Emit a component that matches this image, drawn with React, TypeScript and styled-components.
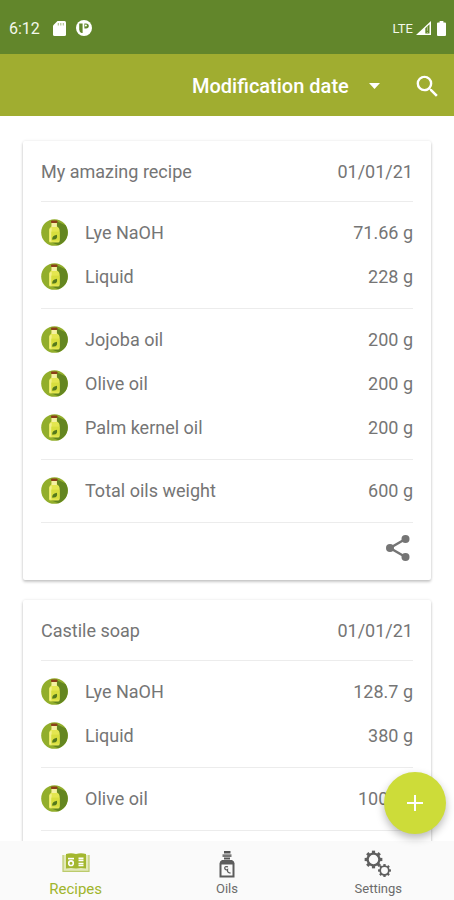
import React from "react";
import styled, { createGlobalStyle } from "styled-components";

const GlobalStyle = createGlobalStyle`
  * { box-sizing: border-box; }
  body {
    margin: 0;
    background: #ffffff;
    color: #757575;
    font-family: Roboto, "Liberation Sans", sans-serif;
    font-size: 18px;
  }
  button, select { font: inherit; color: inherit; }
`;

const Screen = styled.div`
  display: flex;
  flex-direction: column;
  height: 100vh;
`;

const StatusBar = styled.div`
  flex: none;
  display: flex;
  align-items: center;
  justify-content: space-between;
  height: 54px;
  padding: 2px 8px 0 9px;
  background: #62862b;
  color: #f4f8ec;
  font-size: 16px;
`;

const StatusGroup = styled.div<{ $gap: number }>`
  display: flex;
  align-items: center;
  gap: ${({ $gap }) => $gap}px;
`;

const Clock = styled.span`
  margin-right: 3px;
`;

const Network = styled.span`
  font-size: 13px;
`;

const AppBar = styled.header`
  flex: none;
  display: flex;
  align-items: center;
  justify-content: flex-end;
  gap: 33px;
  height: 62px;
  padding: 2px 12px 0;
  background: #a0ad30;
  color: #ffffff;
`;

const SortBox = styled.label`
  display: flex;
  align-items: center;
  gap: 20px;
`;

const SortSelect = styled.select`
  appearance: none;
  border: 0;
  padding: 0;
  background: transparent;
  font-size: 20px;
  font-weight: 500;
  line-height: 24px;

  option { color: #424242; }
`;

const IconButton = styled.button`
  display: flex;
  padding: 0;
  border: 0;
  background: transparent;
  cursor: pointer;
`;

const Content = styled.main`
  position: relative;
  flex: 1;
  min-height: 0;
  display: flex;
  flex-direction: column;
`;

const RecipeList = styled.div`
  flex: 1;
  min-height: 0;
  display: flex;
  flex-direction: column;
  gap: 20px;
  padding: 25px 23px;
  overflow-y: auto;
  scrollbar-width: none;
`;

const Card = styled.article`
  flex: none;
  padding: 0 18px;
  border-radius: 2px;
  background: #ffffff;
  box-shadow: 0 2px 3px rgba(0, 0, 0, 0.2), 0 0 3px rgba(0, 0, 0, 0.1);
`;

const CardHeader = styled.div`
  display: flex;
  align-items: center;
  justify-content: space-between;
  height: 60px;
`;

const CardTitle = styled.h2`
  margin: 0;
  font-size: 18px;
  font-weight: 400;
`;

const Group = styled.ul`
  margin: 0;
  padding: 8px 0 10px;
  border-top: 1px solid #ececec;
  list-style: none;
`;

const Row = styled.li`
  display: flex;
  align-items: center;
  height: 44px;
`;

const Name = styled.span`
  flex: 1;
  margin-left: 17px;
`;

const CardFooter = styled.div`
  display: flex;
  align-items: center;
  justify-content: flex-end;
  height: 58px;
  padding-bottom: 8px;
  border-top: 1px solid #ececec;
`;

const Fab = styled.button`
  position: absolute;
  right: 8px;
  bottom: 7px;
  display: flex;
  align-items: center;
  justify-content: center;
  width: 62px;
  height: 62px;
  border: 0;
  border-radius: 50%;
  background: #cddc39;
  color: #ffffff;
  box-shadow: 0 4px 8px rgba(0, 0, 0, 0.28);
  cursor: pointer;
`;

const BottomNav = styled.nav`
  flex: none;
  display: grid;
  grid-template-columns: repeat(3, 1fr);
  height: 59px;
  background: #fafafa;
`;

const NavItem = styled.a<{ $active?: boolean }>`
  display: flex;
  flex-direction: column;
  align-items: center;
  justify-content: space-between;
  padding: 9px 0 2px;
  color: ${({ $active }) => ($active ? "#a0b52c" : "#6b6b6b")};
  font-size: ${({ $active }) => ($active ? 15 : 13)}px;
  line-height: 18px;
  text-decoration: none;
`;

const SdCardIcon = () => (
  <svg width="13" height="15" viewBox="0 0 13 15" aria-hidden="true">
    <path d="M4.5 0H11.5Q13 0 13 1.5V13.5Q13 15 11.5 15H1.5Q0 15 0 13.5V4.5Z" fill="#fff" />
    <path d="M5.3 2V4.6M7.8 2V4.6M10.3 2V4.6" stroke="#a9bf87" strokeWidth="1.1" />
  </svg>
);

const AppBadgeIcon = () => (
  <svg width="16" height="16" viewBox="0 0 16 16" aria-hidden="true">
    <circle cx="8" cy="8" r="8" fill="#fff" />
    <path d="M3.2 3.4H6.6V13H5.6Q3.2 11.8 3.2 9.4Z" fill="#62862b" />
    <path d="M8.4 3.4H10Q12.8 3.6 12.8 5.900T10 8.400H8.400Z" fill="#62862b" />
    <circle cx="9.900" cy="5.500" r="1" fill="#fff" />
  </svg>
);

const SignalIcon = () => (
  <svg width="15" height="14" viewBox="0 0 15 14" aria-hidden="true">
    <path d="M0 14L15 0V14Z" fill="#fff" />
    <path d="M9.3 12.6V7.2L13.5 3.3V12.6Z" fill="#62862b" />
    <path d="M11.4 5.2V9.8M11.4 11V12.6" stroke="#a9bf87" strokeWidth="1" />
  </svg>
);

const BatteryIcon = () => (
  <svg width="9" height="15" viewBox="0 0 9 15" aria-hidden="true">
    <path d="M2.6 0H6.4V1.5H8Q9 1.5 9 2.5V14Q9 15 8 15H1Q0 15 0 14V2.5Q0 1.5 1 1.5H2.6Z" fill="#fff" />
  </svg>
);

const CaretIcon = () => (
  <svg width="11" height="6" viewBox="0 0 11 6" aria-hidden="true">
    <path d="M0 0H11L5.5 6Z" fill="#fff" />
  </svg>
);

const SearchIcon = () => (
  <svg width="29" height="29" viewBox="0 0 24 24" aria-hidden="true">
    <path
      fill="#fff"
      d="M15.5 14h-.79l-.28-.27A6.47 6.47 0 0 0 16 9.5 6.5 6.5 0 1 0 9.5 16c1.61 0 3.09-.59 4.23-1.57l.27.28v.79l5 4.99L20.49 19l-4.99-5zm-6 0C7.01 14 5 11.99 5 9.5S7.01 5 9.5 5 14 7.01 14 9.5 11.99 14 9.5 14z"
    />
  </svg>
);

const BottleIcon = () => (
  <svg width="27" height="27" viewBox="0 0 27 27" aria-hidden="true">
    <circle cx="13.5" cy="13.5" r="13.3" fill="#92ae2b" />
    <path d="M16 2.5L24.6 6.2A13.3 13.3 0 0 1 17.5 26.2L9.5 23Z" fill="#648620" />
    <path d="M10.6 3.5H15.8V7.2Q18.6 8.6 18.6 11V22Q18.6 23.6 17 23.6H9.6Q8 23.6 8 22V11Q8 8.600 10.600 7.200Z" fill="#e4e650" />
    <path d="M10.600 4H15.800V8H10.600Z" fill="#f4f0a2" />
    <path d="M8.600 10.600Q9 9 10.600 8.400V22.400H8.600Z" fill="#f2f18c" />
    <rect x="10" y="1.400" width="6.400" height="2.700" rx="0.800" fill="#8c3f19" />
    <path d="M10.300 12.600H18.600V21.600H10.300Z" fill="#d8de3e" />
    <path d="M11.300 20.700Q10.500 16.600 15.900 15.700Q17 20.500 12.700 20.500Z" fill="#55791d" />
  </svg>
);

const ShareIcon = () => (
  <svg width="30" height="30" viewBox="0 0 30 30" aria-hidden="true">
    <path d="M22.500 6L7 15L22.500 24" fill="none" stroke="#757575" strokeWidth="2.500" />
    <circle cx="22.500" cy="6" r="4" fill="#757575" />
    <circle cx="7" cy="15" r="4" fill="#757575" />
    <circle cx="22.500" cy="24" r="4" fill="#757575" />
  </svg>
);

const PlusIcon = () => (
  <svg width="16" height="16" viewBox="0 0 16 16" aria-hidden="true">
    <path d="M8 0V16M0 8H16" stroke="currentColor" strokeWidth="2" />
  </svg>
);

const RecipesIcon = () => (
  <svg width="28" height="26" viewBox="0 0 28 26" aria-hidden="true">
    <path d="M1 5H27V21.500Q20 22 14 22Q8 22 1 21.500Z" fill="#e2e9b9" />
    <path d="M1 5V21.300H27V5" fill="none" stroke="#bccb6c" strokeWidth="1.200" />
    <path d="M4 4Q9 2.500 14 4Q19 2.500 24 4V18.500Q19 17.500 14 18.500Q9 17.500 4 18.500Z" fill="#a3b72f" />
    <circle cx="9" cy="13.200" r="2.300" fill="none" stroke="#fff" strokeWidth="1.600" />
    <path d="M6 8.600H12" stroke="#fff" strokeWidth="1.600" />
    <path d="M16.500 8.300H21.500M16.500 10.500H21.500M16.500 13.500H21.500M16.500 15.500H21.500" stroke="#fff" strokeWidth="1.700" />
  </svg>
);

const OilsIcon = () => (
  <svg width="18" height="28" viewBox="0 0 18 28" aria-hidden="true">
    <path d="M6 1H12.500V3.500H6Z" fill="#555" />
    <path d="M4.500 4.300H13.500V7H4.500Z" fill="#777" />
    <path d="M6 7.500H12V9.500H6Z" fill="#555" />
    <path d="M4 10H14Q16.500 11 16.500 13.500V27.500H1.500V13.500Q1.500 11 4 10Z" fill="#5c5c5c" />
    <path d="M3.500 14.500H14.500V25.500H3.500Z" fill="#fafafa" />
    <path d="M10 16.800Q6.300 15.800 6.800 18.500Q7.500 20.500 9.500 19.500Q9 23 12.500 23" fill="none" stroke="#5c5c5c" strokeWidth="1.300" />
  </svg>
);

const TEETH = [0, 45, 90, 135, 180, 225, 270, 315];

function Gear({ cx, cy, r }: { cx: number; cy: number; r: number }) {
  return (
    <g transform={`translate(${cx} ${cy})`} fill="#5f5f5f">
      <circle r={r} fill="none" stroke="#5f5f5f" strokeWidth={r * 0.4} />
      {TEETH.map((angle) => (
        <rect
          key={angle}
          x={-r * 0.27}
          y={-r * 1.5}
          width={r * 0.54}
          height={r * 0.5}
          transform={`rotate(${angle})`}
        />
      ))}
    </g>
  );
}

const SettingsIcon = () => (
  <svg width="28" height="28" viewBox="0 0 28 28" aria-hidden="true">
    <Gear cx={9.500} cy={9.500} r={5.900} />
    <Gear cx={20.500} cy={20.500} r={4.300} />
  </svg>
);

type Ingredient = [name: string, amount: string];

interface Recipe {
  title: string;
  date: string;
  groups: Ingredient[][];
}

const RECIPES: Recipe[] = [
  {
    title: "My amazing recipe",
    date: "01/01/21",
    groups: [
      [["Lye NaOH", "71.66 g"], ["Liquid", "228 g"]],
      [["Jojoba oil", "200 g"], ["Olive oil", "200 g"], ["Palm kernel oil", "200 g"]],
      [["Total oils weight", "600 g"]],
    ],
  },
  {
    title: "Castile soap",
    date: "01/01/21",
    groups: [
      [["Lye NaOH", "128.7 g"], ["Liquid", "380 g"]],
      [["Olive oil", "1000 g"]],
    ],
  },
];

function RecipeCard({ recipe }: { recipe: Recipe }) {
  return (
    <Card>
      <CardHeader>
        <CardTitle>{recipe.title}</CardTitle>
        <time>{recipe.date}</time>
      </CardHeader>
      {recipe.groups.map((group, index) => (
        <Group key={index}>
          {group.map(([name, amount]) => (
            <Row key={name}>
              <BottleIcon />
              <Name>{name}</Name>
              <span>{amount}</span>
            </Row>
          ))}
        </Group>
      ))}
      <CardFooter>
        <IconButton type="button" aria-label={`Share ${recipe.title}`}>
          <ShareIcon />
        </IconButton>
      </CardFooter>
    </Card>
  );
}

export default function App() {
  return (
    <Screen>
      <GlobalStyle />
      <StatusBar>
        <StatusGroup $gap={10}>
          <Clock>6:12</Clock>
          <SdCardIcon />
          <AppBadgeIcon />
        </StatusGroup>
        <StatusGroup $gap={6}>
          <StatusGroup $gap={3}>
            <Network>LTE</Network>
            <SignalIcon />
          </StatusGroup>
          <BatteryIcon />
        </StatusGroup>
      </StatusBar>
      <AppBar>
        <SortBox>
          <SortSelect aria-label="Sort by" defaultValue="modified">
            <option value="modified">Modification date</option>
            <option value="name">Name</option>
          </SortSelect>
          <CaretIcon />
        </SortBox>
        <IconButton type="button" aria-label="Search">
          <SearchIcon />
        </IconButton>
      </AppBar>
      <Content>
        <RecipeList>
          {RECIPES.map((recipe) => (
            <RecipeCard key={recipe.title} recipe={recipe} />
          ))}
        </RecipeList>
        <Fab type="button" aria-label="Add recipe">
          <PlusIcon />
        </Fab>
      </Content>
      <BottomNav>
        <NavItem href="#recipes" $active aria-current="page">
          <RecipesIcon />
          Recipes
        </NavItem>
        <NavItem href="#oils">
          <OilsIcon />
          Oils
        </NavItem>
        <NavItem href="#settings">
          <SettingsIcon />
          Settings
        </NavItem>
      </BottomNav>
    </Screen>
  );
}
